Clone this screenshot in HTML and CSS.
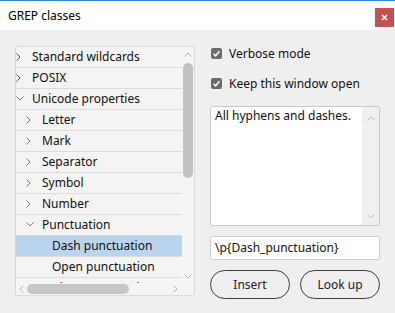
FILE: index.html
```html
<!DOCTYPE html>
<html>
<head>
<meta charset="utf-8">
<link rel="stylesheet" href="styles.css">
</head>
<body>
<div class="window">
  <div class="titlebar">
    <span class="title">GREP classes</span>
    <div class="close"><svg width="7" height="7" viewBox="0 0 7 7"><path d="M1 1L6 6M6 1L1 6" stroke="#fff" stroke-width="1.6"/></svg></div>
  </div>
  <div class="content">
    <div class="tree">
      <div class="rows">
        <div class="row l0"><span class="chev"><svg width="5" height="8" viewBox="0 0 5 8"><path d="M0.5 0.5L4 4L0.5 7.5" fill="none" stroke="#555" stroke-width="1"/></svg></span><span>Standard wildcards</span></div>
        <div class="row l0"><span class="chev"><svg width="5" height="8" viewBox="0 0 5 8"><path d="M0.5 0.5L4 4L0.5 7.5" fill="none" stroke="#555" stroke-width="1"/></svg></span><span>POSIX</span></div>
        <div class="row l0"><span class="chev"><svg width="8" height="5" viewBox="0 0 8 5"><path d="M0.5 0.5L4 4L7.5 0.5" fill="none" stroke="#777" stroke-width="1"/></svg></span><span>Unicode properties</span></div>
        <div class="row l1"><span class="chev"><svg width="5" height="8" viewBox="0 0 5 8"><path d="M0.5 0.5L4 4L0.5 7.5" fill="none" stroke="#777" stroke-width="1"/></svg></span><span>Letter</span></div>
        <div class="row l1"><span class="chev"><svg width="5" height="8" viewBox="0 0 5 8"><path d="M0.5 0.5L4 4L0.5 7.5" fill="none" stroke="#777" stroke-width="1"/></svg></span><span>Mark</span></div>
        <div class="row l1"><span class="chev"><svg width="5" height="8" viewBox="0 0 5 8"><path d="M0.5 0.5L4 4L0.5 7.5" fill="none" stroke="#777" stroke-width="1"/></svg></span><span>Separator</span></div>
        <div class="row l1"><span class="chev"><svg width="5" height="8" viewBox="0 0 5 8"><path d="M0.5 0.5L4 4L0.5 7.5" fill="none" stroke="#777" stroke-width="1"/></svg></span><span>Symbol</span></div>
        <div class="row l1"><span class="chev"><svg width="5" height="8" viewBox="0 0 5 8"><path d="M0.5 0.5L4 4L0.5 7.5" fill="none" stroke="#777" stroke-width="1"/></svg></span><span>Number</span></div>
        <div class="row l1"><span class="chev"><svg width="8" height="5" viewBox="0 0 8 5"><path d="M0.5 0.5L4 4L7.5 0.5" fill="none" stroke="#777" stroke-width="1"/></svg></span><span>Punctuation</span></div>
        <div class="row l2 selected"><span class="chev"></span><span>Dash punctuation</span></div>
        <div class="row l2"><span class="chev"></span><span>Open punctuation</span></div>
        <div class="row l2"><span class="chev"></span><span>Close punctuation</span></div>
      </div>
      <div class="vscroll">
        <svg class="arr-up" width="8" height="5" viewBox="0 0 8 5"><path d="M0.5 4.5L4 1L7.5 4.5" fill="none" stroke="#b5b5b5" stroke-width="1"/></svg>
        <div class="vthumb"></div>
        <div class="vspace"></div>
        <svg class="arr-down" width="8" height="5" viewBox="0 0 8 5"><path d="M0.5 0.5L4 4L7.5 0.5" fill="none" stroke="#b5b5b5" stroke-width="1"/></svg>
      </div>
      <div class="hscroll">
        <svg class="arr-left" width="5" height="8" viewBox="0 0 5 8"><path d="M4.5 0.5L1 4L4.5 7.5" fill="none" stroke="#b5b5b5" stroke-width="1"/></svg>
        <div class="hthumb"></div>
        <div class="hspace"></div>
        <svg class="arr-right" width="5" height="8" viewBox="0 0 5 8"><path d="M0.5 0.5L4 4L0.5 7.5" fill="none" stroke="#b5b5b5" stroke-width="1"/></svg>
      </div>
      <div class="corner"></div>
    </div>
    <div class="side">
      <div class="check"><span class="box"><svg width="9" height="9" viewBox="0 0 9 9"><path d="M1.5 4.8L3.6 6.8L7.5 2.3" fill="none" stroke="#fff" stroke-width="1.5"/></svg></span><span>Verbose mode</span></div>
      <div class="check second"><span class="box"><svg width="9" height="9" viewBox="0 0 9 9"><path d="M1.5 4.8L3.6 6.8L7.5 2.3" fill="none" stroke="#fff" stroke-width="1.5"/></svg></span><span>Keep this window open</span></div>
      <div class="desc">
        <div class="desc-text">All hyphens and dashes.</div>
        <div class="dscroll">
          <svg width="8" height="5" viewBox="0 0 8 5"><path d="M0.5 4.5L4 1L7.5 4.5" fill="none" stroke="#c0c0c0" stroke-width="1"/></svg>
          <svg width="8" height="5" viewBox="0 0 8 5"><path d="M0.5 0.5L4 4L7.5 0.5" fill="none" stroke="#c0c0c0" stroke-width="1"/></svg>
        </div>
      </div>
      <div class="field">\p{Dash_punctuation}</div>
      <div class="buttons">
        <div class="btn">Insert</div>
        <div class="btn">Look up</div>
      </div>
    </div>
  </div>
</div>
</body>
</html>
```
FILE: styles.css
```css
* { box-sizing: border-box; }
html, body { margin: 0; padding: 0; }
body {
  width: 395px;
  height: 313px;
  overflow: hidden;
  background: #efefef;
  font-family: "Noto Sans", "Open Sans", sans-serif;
  font-size: 12px;
  color: #111;
}
.window { width: 395px; height: 313px; display: flex; flex-direction: column; }
.titlebar {
  height: 30px;
  border-top: 1px solid #2b87d6;
  background: #fff;
  display: flex;
  align-items: flex-start;
  justify-content: space-between;
  padding: 0 1px 0 8px;
}
.title { line-height: 29px; font-size: 12px; color: #000; }
.close {
  margin-top: 7px;
  width: 19px;
  height: 19px;
  background: #c75050;
  display: flex;
  align-items: center;
  justify-content: center;
}
.content {
  display: flex;
  align-items: flex-start;
  gap: 15px;
  padding: 0 15px;
}
.tree {
  margin-top: 16px;
  width: 180px;
  height: 250px;
  border: 1px solid #dadada;
  border-radius: 2px;
  background: #f4f4f4;
  display: grid;
  grid-template-columns: 166px 12px;
  grid-template-rows: 236px 12px;
  overflow: hidden;
}
.rows { overflow: hidden; }
.row {
  height: 21px;
  border-bottom: 1px solid #dcdcdc;
  display: flex;
  align-items: center;
  white-space: nowrap;
  padding-bottom: 1px;
}
.row.l1 { padding-left: 10px; }
.row.l2 { padding-left: 20px; }
.row.selected { background: #bbd4ee; }
.chev { width: 16px; flex: none; display: flex; align-items: center; }
.vscroll {
  display: flex;
  flex-direction: column;
  align-items: center;
  padding-top: 5px;
}
.vthumb {
  margin-top: 6px;
  width: 10px;
  height: 115px;
  border-radius: 5px;
  background: #c2c2c2;
}
.vspace { flex: 1; }
.arr-down { margin-bottom: 4px; }
.hscroll {
  display: flex;
  align-items: center;
  padding-left: 3px;
}
.hthumb {
  margin-left: 3px;
  width: 102px;
  height: 10px;
  border-radius: 5px;
  background: #c6c6c6;
}
.hspace { flex: 1; }
.arr-right { margin-right: 4px; }
.corner { background: #f4f4f4; }
.side {
  width: 170px;
  padding-top: 13px;
  display: flex;
  flex-direction: column;
}
.check {
  height: 20px;
  display: flex;
  align-items: center;
  gap: 7px;
  padding-left: 1px;
}
.check.second { margin-top: 10px; }
.box {
  width: 11px;
  height: 11px;
  border-radius: 2px;
  background: #6b6b6b;
  display: flex;
  align-items: center;
  justify-content: center;
}
.desc {
  margin-top: 13px;
  height: 120px;
  background: #fff;
  border: 1px solid #c9c9c9;
  border-radius: 2px;
  display: flex;
}
.desc-text { flex: 1; padding: 1px 4px; line-height: 16px; }
.dscroll {
  width: 17px;
  background: #f0f0f0;
  display: flex;
  flex-direction: column;
  justify-content: space-between;
  align-items: center;
  padding: 9px 0 6px;
}
.field {
  margin-top: 10px;
  height: 24px;
  background: #fff;
  border: 1px solid #cfcfcf;
  border-radius: 2px;
  padding: 0 4px;
  line-height: 22px;
}
.buttons {
  margin-top: 10px;
  display: flex;
  gap: 10px;
}
.btn {
  width: 80px;
  height: 29px;
  border: 1px solid #3c3c3c;
  border-radius: 15px;
  display: flex;
  align-items: center;
  justify-content: center;
  color: #222;
}
```
